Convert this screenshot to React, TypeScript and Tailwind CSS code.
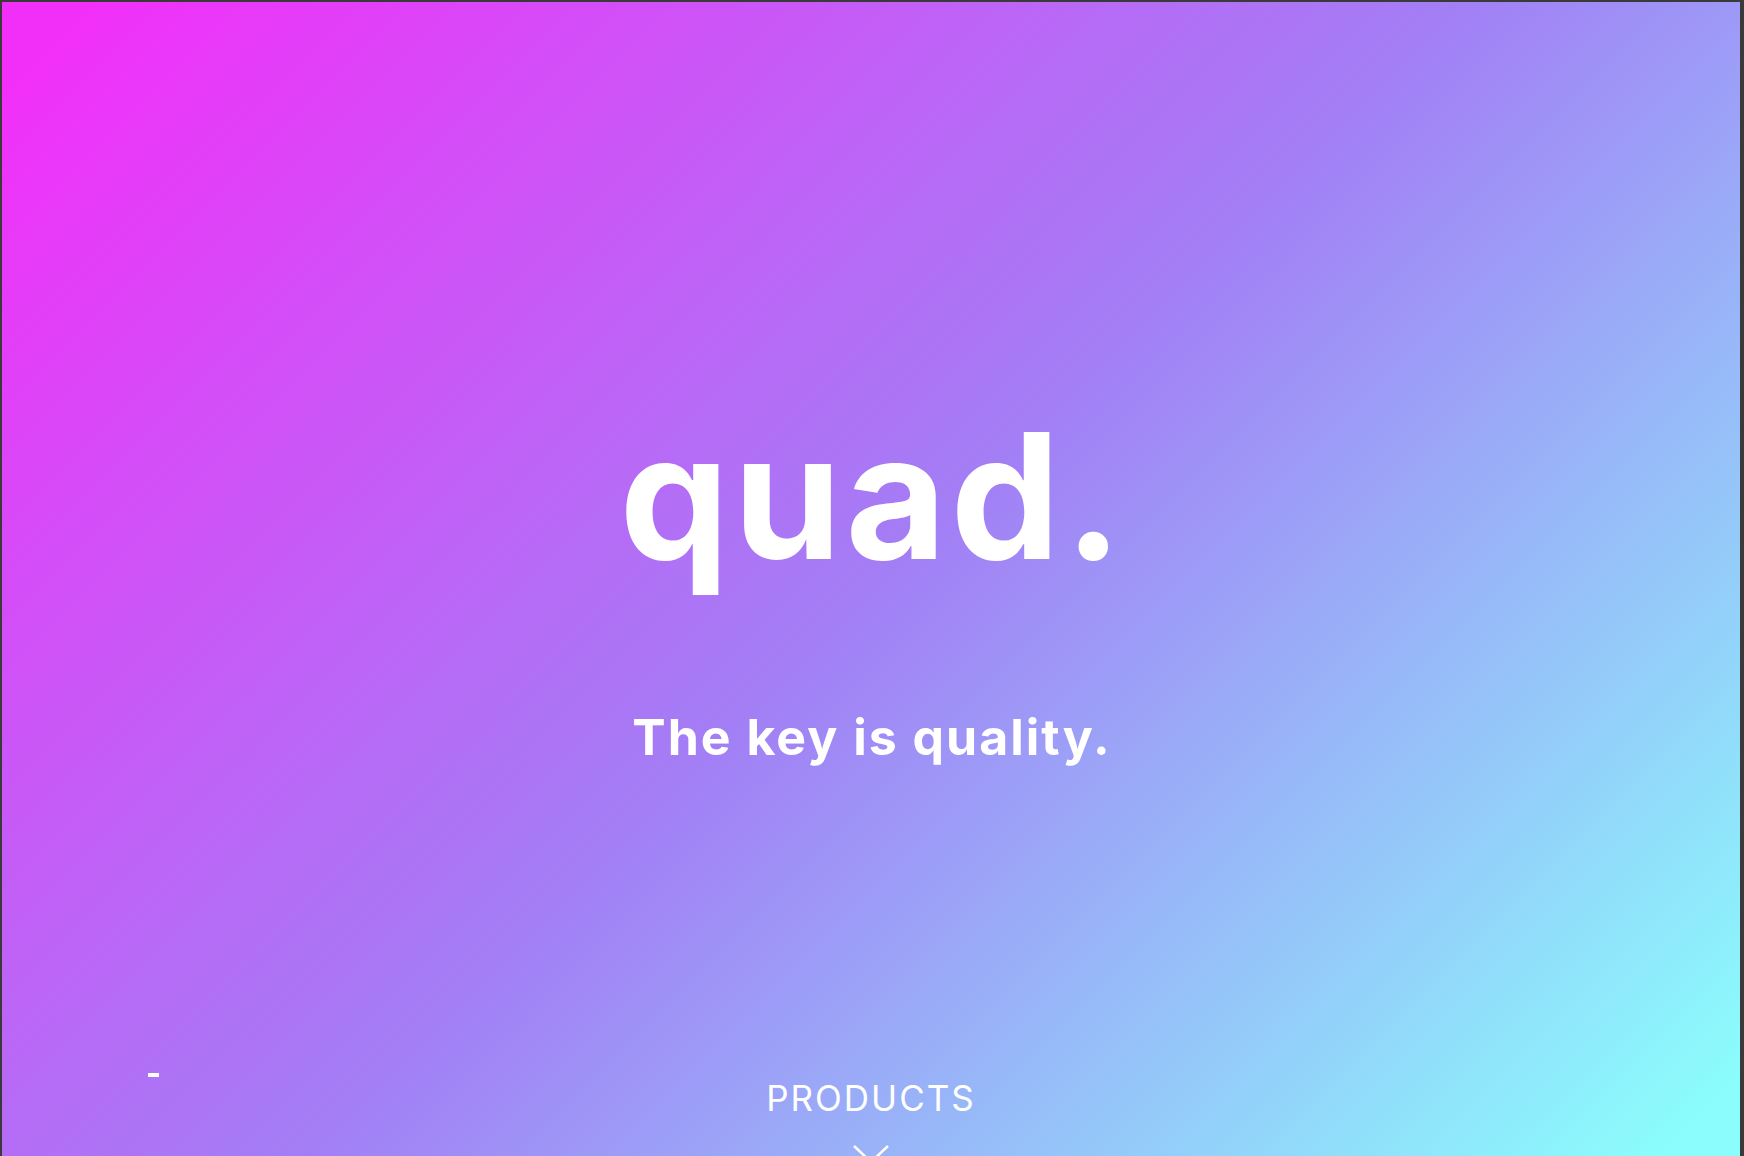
import React from "react";

export default function App() {
  return (
    <div className="h-[1156px] w-full overflow-hidden bg-[#3a3a3a] pt-[2px] pl-[2px] pr-[4px]">
      <div
        className="flex h-[1190px] w-full flex-col items-center bg-[linear-gradient(135deg,#f22ff9_3%,#a27ff5_50%,#8bfdfc_96%)] text-white"
        style={{ fontFamily: "Inter, 'Open Sans', sans-serif" }}
      >
        <h1 className="mt-[407px] pl-[4px] text-[174px] font-bold leading-none tracking-[4px]">
          quad.
        </h1>
        <p className="mt-[129px] pl-[2px] text-[50px] font-bold leading-none tracking-[2px]">
          The key is quality.
        </p>
        <div className="mt-[319px] grid w-full grid-cols-[1fr_auto_1fr] items-start">
          <div className="-mt-[8px] pl-[146px]">
            <div className="h-[4px] w-[11px] bg-white" />
          </div>
          <div className="flex flex-col items-center">
            <span className="text-[35px] font-normal leading-none tracking-[2px]">PRODUCTS</span>
            <svg
              className="mt-[29px]"
              width="36"
              height="20"
              viewBox="0 0 36 20"
              fill="none"
              stroke="white"
              strokeWidth="2.5"
            >
              <path d="M1 1 L18 17 L35 1" />
            </svg>
          </div>
          <div />
        </div>
      </div>
    </div>
  );
}
